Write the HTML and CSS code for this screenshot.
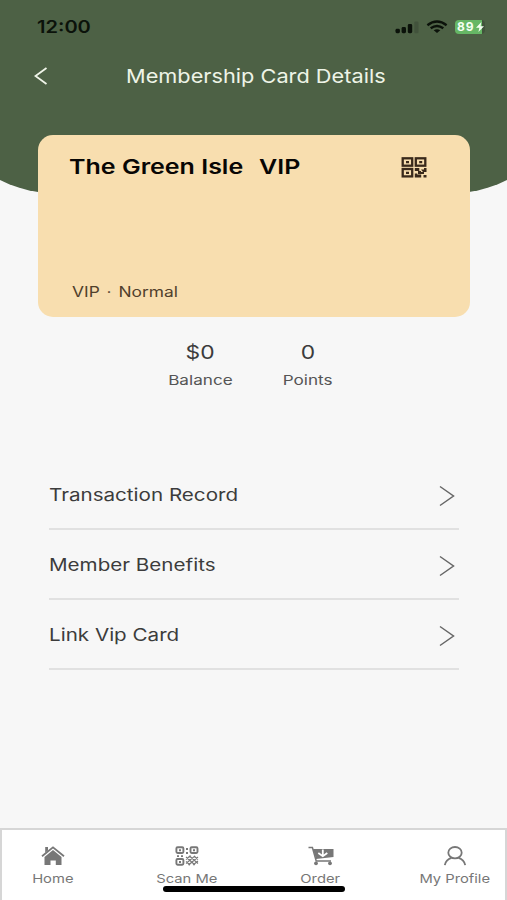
FILE: index.html
```html
<!DOCTYPE html>
<html lang="en">
<head>
<meta charset="utf-8">
<title>Membership Card Details</title>
<link rel="stylesheet" href="styles.css">
</head>
<body>
<div class="screen">
  <svg class="backdrop" viewBox="0 0 507 200" aria-hidden="true"><path d="M0 0H507V180C495 186 482 190 469 192Q254 202 38 192C25 190 12 186 0 180Z" fill="#4d6145"/></svg>
  <div class="status">
    <span class="time wide">12:00</span>
    <div class="indicators">
      <svg width="24" height="14" viewBox="0 0 24 14"><g fill="#0b120a"><rect x="0.5" y="8.8" width="4.4" height="4.4" rx="1.4"/><rect x="6.6" y="7" width="4.4" height="6.2" rx="1.4"/><rect x="12.8" y="4" width="4.4" height="9.2" rx="1.4"/></g><rect x="19.3" y="1.5" width="4.2" height="11.7" rx="1.2" fill="#42533c"/></svg>
      <svg width="22" height="14" viewBox="0 0 22 14" fill="none" stroke="#0b120a" stroke-width="2.4"><path d="M1.4 5.2Q11 -2 20.6 5.2"/><path d="M4.7 8.3Q11 3.6 17.3 8.3"/><path d="M7.7 10.3Q11 8 14.3 10.3L11 13Z" fill="#0b120a" stroke="none"/></svg>
      <span class="battery"><span class="charge">89</span><svg width="8" height="10" viewBox="0 0 8 10"><path d="M5.4 0L0 5.7H3.4L2.4 10L8 4.2H4.6Z" fill="#f4fff2"/></svg></span>
    </div>
  </div>
  <header class="header">
    <svg class="back" width="14" height="18" viewBox="0 0 14 18" fill="none" stroke="#f0f5e9" stroke-width="1.8"><path d="M12.5 1L1.5 9L12.5 17"/></svg>
    <h1 class="title wide">Membership Card Details</h1>
  </header>
  <section class="card">
    <div class="card-top">
      <h2 class="card-name wide">The Green Isle<span class="grade">VIP</span></h2>
      <svg width="26" height="21" viewBox="0 0 26 21"><g fill="none" stroke="#39291b" stroke-width="2.3"><rect x="1.7" y="1.3" width="9.5" height="7.4"/><rect x="14.8" y="1.3" width="9.5" height="7.4"/><rect x="1.7" y="12" width="9.5" height="7.4"/></g><g fill="#39291b"><path d="M5 4h3v2.2H5zM18.2 4h3v2.2h-3zM5 14.7h3v2.2H5z"/><path d="M13.8 11h4.5v3h-4.5zM17 14h3v3h-3zM20 12.5h3V11h2.5v4H23v2h-3v-2h2zM13.8 16.5h2.4v4h-2.4zM16.2 17.5h4v3h-4zM22.5 18h3v2.5h-3z"/></g></svg>
    </div>
    <p class="tier wide">VIP · Normal</p>
  </section>
  <section class="stats">
    <div class="stat"><strong class="wide">$0</strong><span class="wide">Balance</span></div>
    <div class="stat"><strong class="wide">0</strong><span class="wide">Points</span></div>
  </section>
  <nav class="menu">
    <a class="row"><span class="wide">Transaction Record</span><svg width="16" height="22" viewBox="0 0 16 22"><path d="M1 1.5L14.5 11L1 20.5"/></svg></a>
    <a class="row"><span class="wide">Member Benefits</span><svg width="16" height="22" viewBox="0 0 16 22"><path d="M1 1.5L14.5 11L1 20.5"/></svg></a>
    <a class="row"><span class="wide">Link Vip Card</span><svg width="16" height="22" viewBox="0 0 16 22"><path d="M1 1.5L14.5 11L1 20.5"/></svg></a>
  </nav>
  <nav class="tabs">
    <a class="tab"><svg width="24" height="20" viewBox="0 0 24 20"><path d="M3.5 11L12 4L20.5 11V19H14.8V14.5H9.5V19H3.5Z" fill="#777"/><path d="M1 10.3L12 1.4L23 10.3" fill="none" stroke="#777" stroke-width="1.8"/><path d="M4.2 1H7V4.5L4.2 6.7Z" fill="#777"/></svg><span class="wide">Home</span></a>
    <a class="tab"><svg width="24" height="20" viewBox="0 0 24 20"><g fill="none" stroke="#777" stroke-width="1.9"><rect x="1.4" y="1.3" width="7" height="5.7" rx="1.2"/><rect x="15.5" y="1.3" width="7" height="5.7" rx="1.2"/><rect x="1.4" y="13" width="7" height="5.7" rx="1.2"/></g><g fill="#777"><path d="M4 3.2h2v2H4zM18 3.2h2v2h-2zM4 15h2v2H4zM11 2h2v2h-2zM11 6h2v2h-2zM2 9.3h2v1.8H2zM6 9.3h2v1.8H6z"/></g><path d="M11 11L20 19M14.5 10L23 17.5M19 10L23 13.5M11 15.5L15 19M11 13.5L15.5 9.5M11 17.5L20 9.8M13.5 19L23 11M18 19L23 15" stroke="#777" stroke-width="1.1"/></svg><span class="wide">Scan Me</span></a>
    <a class="tab"><svg width="26" height="20" viewBox="0 0 26 20"><path d="M5 3H25.5V11L8 13Z" fill="#777"/><path d="M.5 1.5H4.4L8.2 15H23" fill="none" stroke="#777" stroke-width="1.5"/><circle cx="8" cy="17.3" r="1.9" fill="#777"/><circle cx="22" cy="17.3" r="1.9" fill="#777"/><path d="M14.8 3.5V10M10.3 7L14.8 10.2L19.3 7" fill="none" stroke="#fff" stroke-width="1.8"/></svg><span class="wide">Order</span></a>
    <a class="tab"><svg width="24" height="20" viewBox="0 0 24 20" fill="none" stroke="#777" stroke-width="1.8"><ellipse cx="12" cy="6.7" rx="6.7" ry="5.7"/><path d="M1.8 19.2C2.5 15.2 5 12.8 8.5 11.8M15.5 11.8C19 12.8 21.5 15.2 22.2 19.2"/></svg><span class="wide">My Profile</span></a>
  </nav>
  <div class="home-bar"></div>
</div>
</body>
</html>
```
FILE: styles.css
```css
* { box-sizing: border-box; }
body { margin: 0; font-family: Inter, "Liberation Sans", sans-serif; color: #3c3c3c; background: #f7f7f7; }
h1, h2, p { margin: 0; }
.screen { position: relative; isolation: isolate; width: 507px; height: 900px; display: flex; flex-direction: column; overflow: hidden; background: #f7f7f7; }
.backdrop { position: absolute; z-index: -1; top: 0; left: 0; width: 507px; height: 200px; }
.wide { display: block; white-space: nowrap; transform: scaleX(1.2); }
.status { height: 52px; padding: 1px 22px 0 37px; display: flex; justify-content: space-between; align-items: center; }
.time { font-size: 17px; font-weight: 600; line-height: 20px; color: #0b120a; transform: scaleX(1.18); transform-origin: left; }
.indicators { display: flex; align-items: center; gap: 7px; }
.battery { display: flex; align-items: center; width: 30px; height: 14px; padding-left: 2px; border-radius: 4px; background: linear-gradient(90deg, #66b765 27px, #42533c 27px); }
.charge { font-size: 12px; font-weight: 700; color: #f4fff2; width: 19px; letter-spacing: 1px; }
.header { height: 48px; padding-left: 34px; display: flex; align-items: center; }
.title { margin: 2px 0 0 78px; font-size: 19px; font-weight: 400; line-height: 24px; color: #eef4e7; transform: scaleX(1.144); transform-origin: left; }
.card { width: 432px; height: 182px; margin: 35px 0 0 38px; padding: 20px 43px 16px 32px; border-radius: 15px; background: #f8deaf; display: flex; flex-direction: column; justify-content: space-between; }
.card-top { display: flex; justify-content: space-between; align-items: center; height: 24px; }
.card-name { margin-left: -1px; font-size: 20.5px; font-weight: 600; line-height: 24px; color: #080604; transform: scaleX(1.22); transform-origin: left; }
.grade { margin-left: 13px; }
.tier { margin-left: 2px; font-size: 14px; line-height: 18px; word-spacing: 1.6px; color: #50402c; transform: scaleX(1.24); transform-origin: left; }
.stats { margin: 24px 0 0 150px; display: flex; gap: 8px; }
.stat { width: 100px; display: flex; flex-direction: column; align-items: center; gap: 7px; }
.stat strong { font-size: 19px; font-weight: 400; line-height: 24px; }
.stat span { font-size: 13.5px; line-height: 16px; color: #555; transform: scaleX(1.27); }
.menu { margin: 72px 48px 0 49px; display: flex; flex-direction: column; }
.row { height: 70px; padding-right: 4px; display: flex; align-items: center; justify-content: space-between; border-bottom: 2px solid #e1e1e1; }
.row span { margin-top: 1px; font-size: 17px; line-height: 22px; transform: scaleX(1.212); transform-origin: left; }
.row svg { position: relative; top: 2px; fill: none; stroke: #666; stroke-width: 1.5; }
.tabs { height: 72px; margin-top: auto; padding: 16px 0 0; display: grid; grid-template-columns: 101px 167px 101px 167px; justify-content: start; background: #fff; border: 2px solid #d6d6d6; border-bottom: 0; }
.tab { display: flex; flex-direction: column; align-items: center; gap: 5px; }
.tab span { font-size: 12px; line-height: 16px; color: #777; transform: scaleX(1.23); }
.home-bar { position: absolute; left: 163px; top: 886px; width: 182px; height: 6px; border-radius: 3px; background: #000; }
```
